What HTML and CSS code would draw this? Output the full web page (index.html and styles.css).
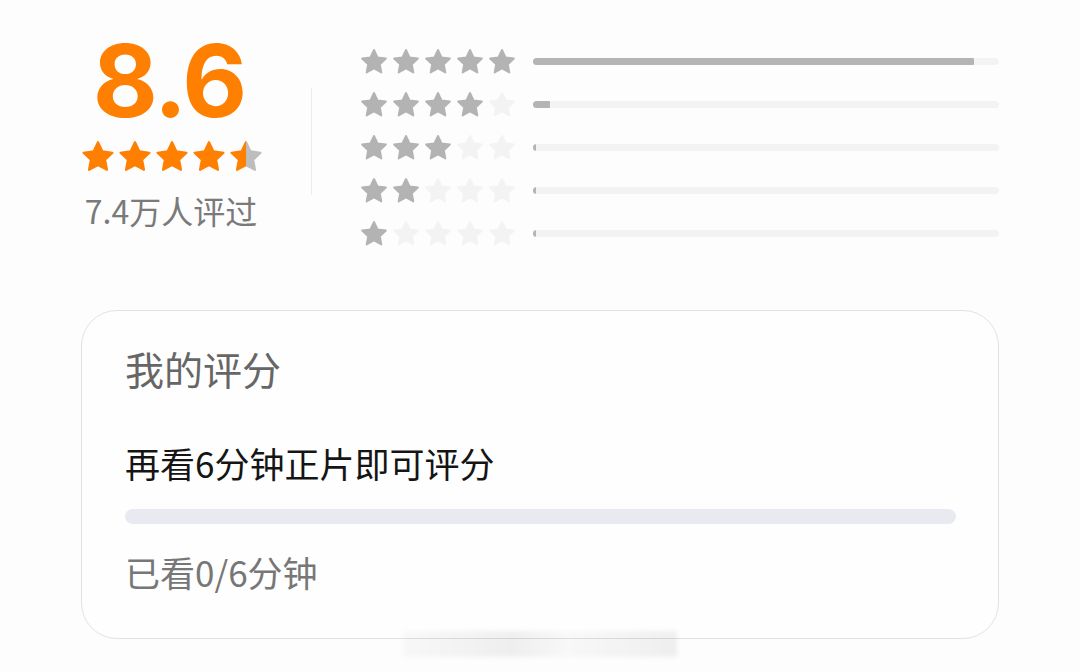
FILE: index.html
```html
<!DOCTYPE html>
<html lang="zh-CN">
<head>
    <meta charset="UTF-8">
    <meta name="viewport" content="width=device-width, initial-scale=1.0">
    <title>评分</title>
    <link rel="stylesheet" href="styles.css">
</head>
<body>
    <svg width="0" height="0" class="defs">
        <defs>
            <path id="star" d="M12 1.6l3.1 6.5 7.1.9-5.2 4.9 1.3 7.1L12 17.6l-6.3 3.4 1.3-7.1-5.2-4.9 7.1-.9z" stroke-linejoin="round" stroke-width="1.6"/>
            <linearGradient id="half" x1="0" x2="1" y1="0" y2="0">
                <stop offset="0.5" stop-color="#ff8000"/>
                <stop offset="0.5" stop-color="#bdbdbd"/>
            </linearGradient>
        </defs>
    </svg>

    <div class="page">
        <!-- Score summary -->
        <section class="summary">
            <div class="score">
                <div class="score-num">8.6</div>
                <div class="stars big">
                    <svg class="star on" viewBox="0 0 24 24"><use href="#star"/></svg>
                    <svg class="star on" viewBox="0 0 24 24"><use href="#star"/></svg>
                    <svg class="star on" viewBox="0 0 24 24"><use href="#star"/></svg>
                    <svg class="star on" viewBox="0 0 24 24"><use href="#star"/></svg>
                    <svg class="star half" viewBox="0 0 24 24"><use href="#star"/></svg>
                </div>
                <div class="score-count">7.4万人评过</div>
            </div>

            <div class="divider"></div>

            <div class="dist">
                <div class="dist-row">
                    <div class="stars small">
                        <svg class="star gray" viewBox="0 0 24 24"><use href="#star"/></svg>
                        <svg class="star gray" viewBox="0 0 24 24"><use href="#star"/></svg>
                        <svg class="star gray" viewBox="0 0 24 24"><use href="#star"/></svg>
                        <svg class="star gray" viewBox="0 0 24 24"><use href="#star"/></svg>
                        <svg class="star gray" viewBox="0 0 24 24"><use href="#star"/></svg>
                    </div>
                    <div class="bar"><div class="bar-fill" style="width: 94.6%"></div></div>
                </div>
                <div class="dist-row">
                    <div class="stars small">
                        <svg class="star gray" viewBox="0 0 24 24"><use href="#star"/></svg>
                        <svg class="star gray" viewBox="0 0 24 24"><use href="#star"/></svg>
                        <svg class="star gray" viewBox="0 0 24 24"><use href="#star"/></svg>
                        <svg class="star gray" viewBox="0 0 24 24"><use href="#star"/></svg>
                        <svg class="star off" viewBox="0 0 24 24"><use href="#star"/></svg>
                    </div>
                    <div class="bar"><div class="bar-fill" style="width: 3.6%"></div></div>
                </div>
                <div class="dist-row">
                    <div class="stars small">
                        <svg class="star gray" viewBox="0 0 24 24"><use href="#star"/></svg>
                        <svg class="star gray" viewBox="0 0 24 24"><use href="#star"/></svg>
                        <svg class="star gray" viewBox="0 0 24 24"><use href="#star"/></svg>
                        <svg class="star off" viewBox="0 0 24 24"><use href="#star"/></svg>
                        <svg class="star off" viewBox="0 0 24 24"><use href="#star"/></svg>
                    </div>
                    <div class="bar"><div class="bar-fill" style="width: 0.6%"></div></div>
                </div>
                <div class="dist-row">
                    <div class="stars small">
                        <svg class="star gray" viewBox="0 0 24 24"><use href="#star"/></svg>
                        <svg class="star gray" viewBox="0 0 24 24"><use href="#star"/></svg>
                        <svg class="star off" viewBox="0 0 24 24"><use href="#star"/></svg>
                        <svg class="star off" viewBox="0 0 24 24"><use href="#star"/></svg>
                        <svg class="star off" viewBox="0 0 24 24"><use href="#star"/></svg>
                    </div>
                    <div class="bar"><div class="bar-fill" style="width: 0.4%"></div></div>
                </div>
                <div class="dist-row">
                    <div class="stars small">
                        <svg class="star gray" viewBox="0 0 24 24"><use href="#star"/></svg>
                        <svg class="star off" viewBox="0 0 24 24"><use href="#star"/></svg>
                        <svg class="star off" viewBox="0 0 24 24"><use href="#star"/></svg>
                        <svg class="star off" viewBox="0 0 24 24"><use href="#star"/></svg>
                        <svg class="star off" viewBox="0 0 24 24"><use href="#star"/></svg>
                    </div>
                    <div class="bar"><div class="bar-fill" style="width: 0.6%"></div></div>
                </div>
            </div>
        </section>

        <!-- My rating card -->
        <section class="my-card">
            <div class="my-title">我的评分</div>
            <div class="my-tip">再看6分钟正片即可评分</div>
            <div class="progress"><div class="progress-fill" style="width: 0%"></div></div>
            <div class="my-watched">已看0/6分钟</div>
        </section>

        <div class="smudge"></div>
    </div>
</body>
</html>
```

FILE: styles.css
```css
/* Basic Reset */
* {
    margin: 0;
    padding: 0;
    box-sizing: border-box;
}

body {
    font-family: "Noto Sans CJK SC", "Noto Sans", sans-serif;
    background: #fdfdfd;
    color: #111;
    width: 1080px;
    height: 672px;
    overflow: hidden;
}

.defs {
    position: absolute;
}

.page {
    width: 918px;
    margin-left: 81px;
    padding-top: 31px;
}

/* Summary */
.summary {
    display: flex;
    align-items: flex-start;
    height: 279px;
}

.score {
    width: 182px;
    display: flex;
    flex-direction: column;
    align-items: center;
}

.score-num {
    font-family: "Inter", "Roboto", sans-serif;
    font-weight: 700;
    font-size: 100px;
    line-height: 100px;
    letter-spacing: -2px;
    color: #ff8000;
    margin-left: -6px;
}

.stars {
    display: flex;
}

.stars.big {
    gap: 3px;
    margin-top: 9px;
}

.stars.big .star {
    width: 34px;
    height: 34px;
}

.stars.small {
    gap: 4px;
    margin-left: -2px;
}

.stars.small .star {
    width: 28px;
    height: 28px;
}

.star {
    display: block;
}

.star.on {
    fill: #ff8000;
    stroke: #ff8000;
}

.star.half {
    fill: url(#half);
    stroke: url(#half);
}

.star.gray {
    fill: #b3b3b3;
    stroke: #b3b3b3;
}

.star.off {
    fill: #f3f3f3;
    stroke: #f3f3f3;
}

.score-count {
    margin-top: 16px;
    font-size: 32px;
    line-height: 40px;
    color: #7a7a7a;
    margin-left: -2px;
}

.divider {
    width: 1px;
    height: 107px;
    background: #ececec;
    margin: 57px 50px 0 48px;
}

.dist {
    flex: 1;
    padding-top: 9px;
}

.dist-row {
    height: 43px;
    display: flex;
    align-items: center;
    gap: 17px;
}

.bar {
    flex: 1;
    height: 7px;
    border-radius: 4px;
    background: #f3f3f3;
    overflow: hidden;
}

.bar-fill {
    height: 100%;
    min-width: 3px;
    background: #b4b4b4;
    border-radius: 1px;
}

/* My rating card */
.my-card {
    height: 329px;
    border: 1px solid #e2e2e2;
    border-radius: 36px;
    background: #fefefe;
    padding: 33px 42px 0 43px;
}

.my-title {
    font-size: 39px;
    line-height: 48px;
    color: #666;
}

.my-tip {
    margin-top: 50px;
    font-size: 35px;
    line-height: 42px;
    color: #151515;
}

.progress {
    margin-top: 25px;
    height: 15px;
    border-radius: 8px;
    background: #e8e9f1;
}

.progress-fill {
    height: 100%;
    background: #ff8000;
    border-radius: 8px;
}

.my-watched {
    margin-top: 27px;
    font-size: 35px;
    line-height: 42px;
    color: #777;
}

.smudge {
    width: 275px;
    height: 26px;
    margin: -8px 0 0 321px;
    background: linear-gradient(90deg, rgba(0,0,0,0.02), rgba(0,0,0,0.06) 40%, rgba(0,0,0,0.02) 60%, rgba(0,0,0,0.06));
    filter: blur(2px);
}
```
